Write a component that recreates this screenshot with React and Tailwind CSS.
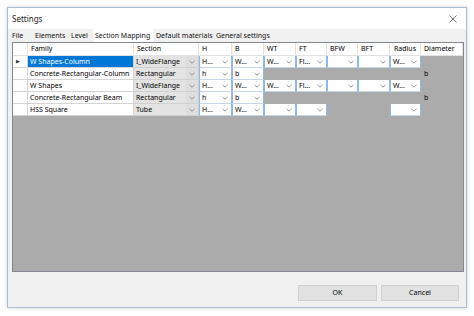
import React from 'react';

const COLS = [
  { id: 'rh', label: '', w: 'w-[15px]' },
  { id: 'family', label: 'Family', w: 'w-[106px]' },
  { id: 'section', label: 'Section', w: 'w-[65px]' },
  { id: 'h', label: 'H', w: 'w-[33px]' },
  { id: 'b', label: 'B', w: 'w-[32px]' },
  { id: 'wt', label: 'WT', w: 'w-[32px]' },
  { id: 'ft', label: 'FT', w: 'w-[31px]' },
  { id: 'bfw', label: 'BFW', w: 'w-[31px]' },
  { id: 'bft', label: 'BFT', w: 'w-[32px]' },
  { id: 'radius', label: 'Radius', w: 'w-[31px]' },
  { id: 'diameter', label: 'Diameter', w: 'w-[42px]' },
];

// cell kinds: c = combo (white, blue frame), g = gray empty, t = gray with text
const ROWS = [
  {
    family: 'W Shapes-Column', section: 'I_WideFlange', selected: true,
    cells: [['c', 'H...'], ['c', 'W...'], ['c', 'W...'], ['c', 'Fl...'], ['c', ''], ['c', ''], ['c', 'W...'], ['g', '']],
  },
  {
    family: 'Concrete-Rectangular-Column', section: 'Rectangular',
    cells: [['c', 'h'], ['c', 'b'], ['g', ''], ['g', ''], ['g', ''], ['g', ''], ['g', ''], ['t', 'b']],
  },
  {
    family: 'W Shapes', section: 'I_WideFlange',
    cells: [['c', 'H...'], ['c', 'W...'], ['c', 'W...'], ['c', 'Fl...'], ['c', ''], ['c', ''], ['c', 'W...'], ['g', '']],
  },
  {
    family: 'Concrete-Rectangular Beam', section: 'Rectangular',
    cells: [['c', 'h'], ['c', 'b'], ['g', ''], ['g', ''], ['g', ''], ['g', ''], ['g', ''], ['t', 'b']],
  },
  {
    family: 'HSS Square', section: 'Tube',
    cells: [['c', 'H...'], ['c', 'W...'], ['c', ''], ['c', ''], ['g', ''], ['g', ''], ['c', ''], ['g', '']],
  },
];

function Chevron() {
  return (
    <svg width="6" height="4" viewBox="0 0 6 4" className="shrink-0">
      <polyline points="0.5,0.8 3,3.2 5.5,0.8" fill="none" stroke="#8a8a8a" strokeWidth="0.9" />
    </svg>
  );
}

function Cell({ col, kind, text }) {
  if (kind === 'c') {
    return (
      <div className={`${col.w} h-full bg-white border-x border-[#8fb8e6] border-b border-b-[#c8d8ea] flex items-center pl-[2px] pr-[3px] justify-between whitespace-nowrap`}>
        <span>{text}</span>
        <Chevron />
      </div>
    );
  }
  if (kind === 't') {
    return (
      <div className={`${col.w} h-full bg-[#ababab] flex items-center pl-[3px]`}>
        <span>{text}</span>
      </div>
    );
  }
  return <div className={`${col.w} h-full bg-[#ababab]`} />;
}

function Row({ row }) {
  return (
    <div className="flex h-[12px]">
      <div className={`${COLS[0].w} h-full bg-white border-r border-b border-[#d4d4d4] flex items-center pl-[3px]`}>
        {row.selected && <span className="text-[5px] leading-none text-[#333]">▶</span>}
      </div>
      <div className={`${COLS[1].w} h-full border-r border-b border-[#d4d4d4] flex items-center pl-[2px] whitespace-nowrap overflow-hidden ${row.selected ? 'bg-[#0078d7] text-white' : 'bg-white'}`}>
        <span>{row.family}</span>
      </div>
      <div className={`${COLS[2].w} h-full bg-[#e3e3e3] border-r border-b border-[#d0d0d0] flex items-center whitespace-nowrap`}>
        <span className="flex-1 pl-[2px]">{row.section}</span>
        <div className="w-[12px] h-full flex items-center justify-center bg-[#dedede]">
          <Chevron />
        </div>
      </div>
      {row.cells.map(([kind, text], i) => (
        <Cell key={i} col={COLS[i + 3]} kind={kind} text={text} />
      ))}
    </div>
  );
}

export default function App() {
  return (
    <div className="w-[474px] h-[316px] bg-white pt-[7px] pl-[7px] text-[7px] leading-[12px] text-black" style={{ fontFamily: '"Segoe UI", "Noto Sans", sans-serif' }}>
      <div className="w-[460px] h-[301px] border border-[#a9bdd6] bg-[#f0f0f0] flex flex-col shadow-[0_0_4px_rgba(0,0,0,0.18)]">
        {/* title bar */}
        <div className="h-[21px] bg-white flex items-center justify-between pl-[4px] pr-[9px] shrink-0">
          <span className="text-[8px] text-[#222]">Settings</span>
          <svg width="8" height="8" viewBox="0 0 8 8">
            <path d="M0.5 0.5 L7.5 7.5 M7.5 0.5 L0.5 7.5" stroke="#555" strokeWidth="0.8" />
          </svg>
        </div>

        {/* menu + tabs */}
        <div className="h-[13px] flex items-stretch shrink-0 text-[#111] whitespace-nowrap">
          <span className="ml-[4px] w-[23px] flex items-center">File</span>
          <span className="w-[36px] flex items-center">Elements</span>
          <span className="w-[22px] flex items-center">Level</span>
          <span className="w-[61px] pl-[2px] flex items-center bg-white">Section Mapping</span>
          <span className="w-[62px] pl-[2px] flex items-center">Default materials</span>
          <span className="flex items-center">General settings</span>
        </div>

        {/* grid */}
        <div className="ml-[4px] w-[452px] h-[230px] border border-[#828790] bg-[#ababab] shrink-0 overflow-hidden">
          <div className="flex h-[13px] bg-white">
            {COLS.map((col) => (
              <div key={col.id} className={`${col.w} h-full border-r border-b border-[#e2e2e2] flex items-center ${col.id === 'radius' ? 'justify-center' : 'pl-[3px]'}`}>
                <span>{col.label}</span>
              </div>
            ))}
          </div>
          {ROWS.map((row, i) => (
            <Row key={i} row={row} />
          ))}
        </div>

        {/* buttons */}
        <div className="flex justify-end gap-[4px] pr-[7px] mt-[13px]">
          <button className="w-[79px] h-[16px] bg-[#e1e1e1] border border-[#d0d0d0] flex items-center justify-center">OK</button>
          <button className="w-[78px] h-[16px] bg-[#e1e1e1] border border-[#d0d0d0] flex items-center justify-center">Cancel</button>
        </div>
      </div>
    </div>
  );
}
